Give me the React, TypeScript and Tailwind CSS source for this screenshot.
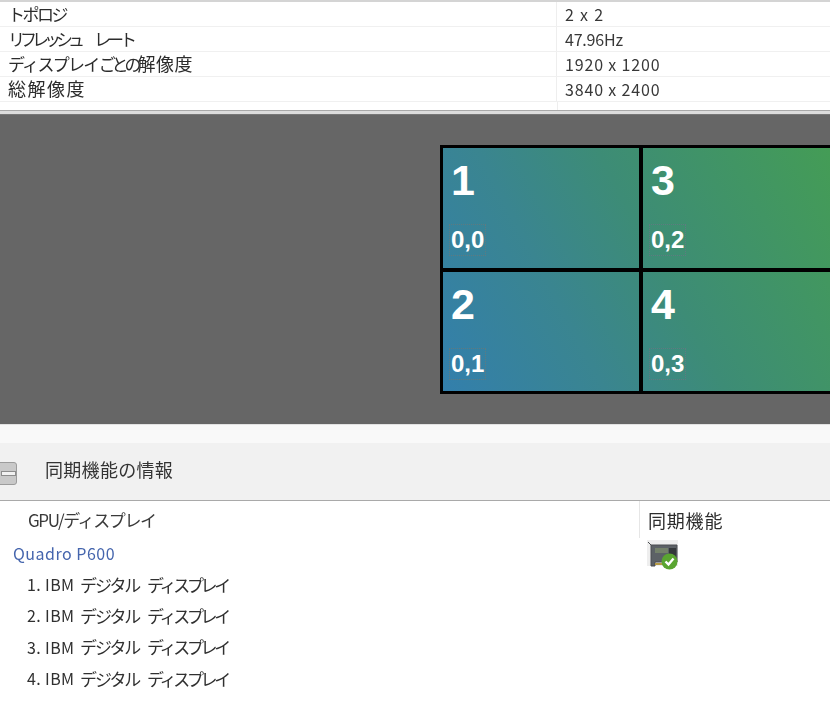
const font = "font-['Noto_Sans_CJK_JP','Liberation_Sans',sans-serif]";

const infoRows = [
  { id: "a", label: <span className="text-[17px] tracking-[-2.5px]">トポロジ</span>, value: "2 x 2", vs: "tracking-[1.3px]" },
  {
    id: "b",
    label: (
      <>
        <span className="text-[17px] tracking-[-5px] inline-block w-[86px]">リフレッシュ</span>
        <span className="text-[17px] tracking-[-4px]">レート</span>
      </>
    ),
    value: "47.96Hz",
    vs: "tracking-[-0.2px]",
  },
  {
    id: "c",
    label: (
      <>
        <span className="text-[17px] tracking-[-1.7px]">ディスプレイ</span>
        <span className="text-[17px] tracking-[-4px]">ごとの</span>
        <span className="text-[18px] tracking-[0.5px]">解像度</span>
      </>
    ),
    value: "1920 x 1200",
    vs: "tracking-[0.85px]",
  },
  { id: "d", label: <span className="text-[18px] tracking-[1.5px]">総解像度</span>, value: "3840 x 2400", vs: "tracking-[0.85px]" },
];

const tiles = [
  { n: "1", pos: "0,0", cls: "border-r-[4px] border-b-[4px] border-black" },
  { n: "3", pos: "0,2", cls: "border-b-[4px] border-black" },
  { n: "2", pos: "0,1", cls: "border-r-[4px] border-black" },
  { n: "4", pos: "0,3", cls: "" },
];

function CardIcon() {
  return (
    <svg width="34" height="33" viewBox="0 0 34 33">
      <rect x="1" y="1" width="31" height="26" fill="#eeeeee" />
      <path d="M2 3 L5 6 H31 V23 H9 V27 H5 V6" fill="#5c6166" stroke="#4a4d50" strokeWidth="1" />
      <rect x="9" y="9" width="13" height="5" fill="#73806a" />
      <rect x="23" y="9" width="7" height="9" fill="#34383b" />
      <rect x="9" y="24" width="13" height="2" fill="#b59a45" />
      <circle cx="23.5" cy="22.5" r="8" fill="#5aa531" />
      <path d="M19.5 22.5 L22.5 25.5 L27.5 19.5" fill="none" stroke="#ffffff" strokeWidth="2.4" />
    </svg>
  );
}

export default function App() {
  return (
    <div className={`w-[830px] h-[715px] overflow-hidden bg-white flex flex-col ${font}`}>
      <div className="h-[2px] bg-[#d4d4d4]" />
      <div className="h-[108px] flex flex-col">
        {infoRows.map((r) => (
          <div key={r.id} className="h-[25px] shrink-0 flex border-b border-[#f0f0f0]">
            <div className="w-[557px] shrink-0 pl-[8px] pb-[2px] border-r border-[#eeeeee] flex items-center">
              <span className="leading-none text-[#2c2c2c] whitespace-pre blur-[0.4px]">{r.label}</span>
            </div>
            <div className="pl-[8px] pb-[1px] flex items-center">
              <span className={`text-[16px] leading-none text-[#383838] whitespace-pre blur-[0.4px] ${r.vs}`}>{r.value}</span>
            </div>
          </div>
        ))}
        <div className="flex-1 ml-[557px] border-l border-[#eeeeee]" />
      </div>
      <div className="h-[4px] bg-[#dcdcdc] border-t border-[#a8a8a8]" />
      <div className="h-[310px] shrink-0 bg-[#666666] pl-[440px] pt-[30px] border-t border-[#777777]">
        <div className="w-[420px] h-[249px] border-[3px] border-black grid grid-cols-[200px_1fr] grid-rows-[124px_1fr] bg-[linear-gradient(62deg,#337fac_0%,#3a8590_30%,#3d8c76_52%,#459e52_100%)]">
          {tiles.map((t) => (
            <div key={t.n} className={`${t.cls} flex flex-col pl-[8px] font-['Liberation_Sans',sans-serif] font-bold text-white`}>
              <span className="text-[43px] leading-none mt-[11px]">{t.n}</span>
              <span className="text-[24px] leading-[30px] mt-[22px] w-fit -ml-[2px] px-[1px] border border-dotted border-[#5f7a80]">{t.pos}</span>
            </div>
          ))}
        </div>
      </div>
      <div className="h-[19px] shrink-0 bg-[#f9f9f9] border-t border-[#e2e2e2]" />
      <div className="h-[58px] shrink-0 bg-[#f1f1f1] border-b border-[#a9a9a9] flex items-center">
        <div className="w-[24px] h-[23px] -ml-[7px] mt-[3px] rounded-[3px] bg-[#c9c9c9] border border-[#9c9c9c] flex items-center justify-center">
          <div className="w-[15px] h-[5px] ml-[6px] bg-[#f2f2f2] border border-[#8d8d8d]" />
        </div>
        <span className="ml-[28px] mb-[6px] text-[18px] leading-none text-[#333333] tracking-[0.3px] blur-[0.4px]">同期機能の情報</span>
      </div>
      <div className="flex-1 flex flex-col">
        <div className="h-[38px] shrink-0 flex">
          <div className="w-[640px] shrink-0 pl-[28px] pt-[7px] border-r border-[#e6e6e6] h-[37px]">
            <span className="text-[17px] leading-[24px] block text-[#3a3a3a] tracking-[-1.4px] blur-[0.4px]">GPU/ディスプレイ</span>
          </div>
          <div className="pl-[8px] pt-[7px]">
            <span className="text-[18px] leading-[24px] block text-[#2c2c2c] tracking-[0.8px] blur-[0.4px]">同期機能</span>
          </div>
        </div>
        <div className="flex h-[32px] shrink-0">
          <div className="w-[646px] shrink-0 pl-[13px] text-[16px] leading-[28px] text-[#4565ad] tracking-[0.5px] blur-[0.4px]">Quadro P600</div>
          <CardIcon />
        </div>
        {[1, 2, 3, 4].map((n) => (
          <div key={n} className="h-[31.3px] shrink-0 pl-[27px] pb-[5px] flex items-center text-[#303030] blur-[0.4px] whitespace-pre">
            <span className="text-[16px] leading-none tracking-[0.4px] w-[53px]">{n}. IBM</span>
            <span className="text-[17px] leading-none tracking-[-2.1px] w-[67px]">デジタル</span>
            <span className="text-[17px] leading-none tracking-[-3.3px]">ディスプレイ</span>
          </div>
        ))}
      </div>
    </div>
  );
}
